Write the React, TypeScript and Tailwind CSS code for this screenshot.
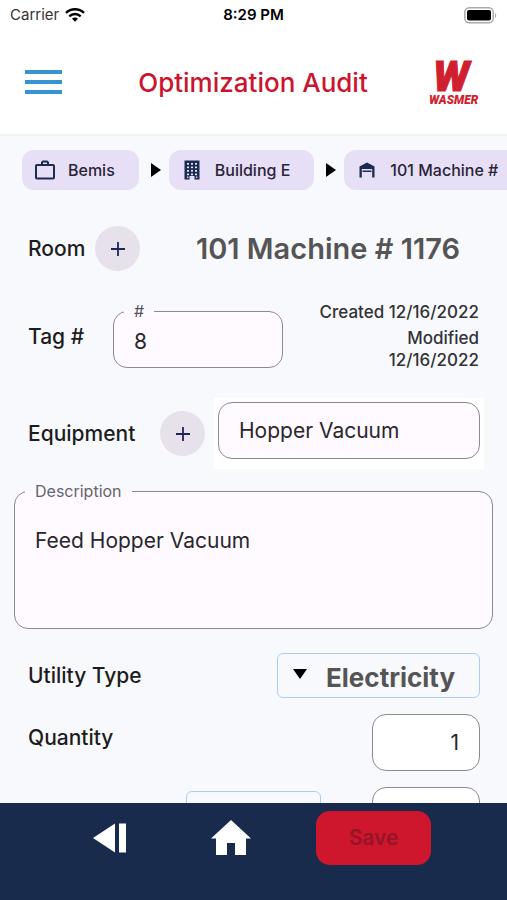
import type { ReactNode } from "react";

function WifiIcon() {
  return (
    <svg viewBox="0 0 20 15" className="h-4 w-5" fill="none" stroke="#000" strokeWidth="2.4" aria-hidden="true">
      <path d="M1 5.4C6 .5 14 .5 19 5.4" />
      <path d="M4.3 8.8c3.3-3 8.100-3 11.400 0" />
      <path d="M7 11.200c1.800-1.500 4.200-1.500 6 0L10 14.200z" fill="#000" stroke="none" />
    </svg>
  );
}

function BatteryIcon() {
  return (
    <svg viewBox="0 0 33 17" className="h-[17px] w-[33px]" aria-hidden="true">
      <rect x="0.750" y="0.750" width="28.500" height="15" rx="4.500" fill="#fff" stroke="#aaa" strokeWidth="1.500" />
      <rect x="3" y="3" width="24" height="10.500" rx="2" fill="#000" />
      <path d="M31 6v5c1.600-.8 1.600-4.200 0-5z" fill="#aaa" />
    </svg>
  );
}

function Logo() {
  return (
    <svg viewBox="0 0 50 46" className="h-[46px] w-[50px] overflow-visible" role="img" aria-label="Wasmer">
      <g fill="#d01f2f" fontFamily="Roboto, 'Liberation Sans', sans-serif" fontWeight="900" fontStyle="italic">
        <text x="4" y="32" fontSize="43" stroke="#d01f2f" strokeWidth="1">W</text>
        <text x="0" y="45" fontSize="12">WASMER</text>
      </g>
    </svg>
  );
}

function BriefcaseIcon() {
  return (
    <svg viewBox="0 0 22 20" className="h-5 w-[22px]" fill="none" stroke="#1b2c50" strokeWidth="2" strokeLinejoin="round" aria-hidden="true">
      <rect x="2" y="5" width="18" height="13.500" rx="1" />
      <path d="M8 5V2.500L9 1.500h4l1 1V5" />
    </svg>
  );
}

function OfficeIcon() {
  const rows = [3, 6.500, 10, 13.500];
  const columns = [3, 7, 11];
  return (
    <svg viewBox="0 0 16 20" className="h-5 w-4" aria-hidden="true">
      <path d="M.5.500h15v19h-5V16h-5v3.500h-5z" fill="#1b2c50" />
      {rows.map((y) => columns.map((x) => <rect key={`${x}-${y}`} x={x} y={y} width="2" height="1.700" fill="#e6dff6" />))}
      <rect x="3" y="16.500" width="1.300" height="1.500" fill="#e6dff6" />
      <rect x="12" y="16.500" width="1.300" height="1.500" fill="#e6dff6" />
    </svg>
  );
}

function GarageIcon() {
  return (
    <svg viewBox="0 0 16 16" className="h-4 w-4" fill="#1b2c50" aria-hidden="true">
      <path d="M.5 4.500 8 .5l7.500 4v11h-2.300V7H2.800v8.500H.5z" />
      <path d="M3.500 8.500h9V10h-9z" />
    </svg>
  );
}

function Separator() {
  return (
    <svg viewBox="0 0 10 14" className="mr-2 ml-3 h-3.5 w-2.5 shrink-0" aria-hidden="true">
      <path d="M0 0 10 7 0 14z" fill="#000" />
    </svg>
  );
}

function Chip({ icon, children }: { icon: ReactNode; children: ReactNode }) {
  return (
    <a href="#" className="flex h-10 shrink-0 items-center rounded-xl bg-[#e6dff6] px-3 text-base font-medium whitespace-nowrap text-[#2a2438]">
      <span className="flex w-[22px] justify-center">{icon}</span>
      <span className="px-3">{children}</span>
    </a>
  );
}

function AddButton({ label }: { label: string }) {
  return (
    <button type="button" aria-label={label} className="flex size-[45px] shrink-0 items-center justify-center rounded-full bg-[#e6e1eb]">
      <svg viewBox="0 0 14 14" className="size-3.5" stroke="#1f2459" strokeWidth="1.800" aria-hidden="true">
        <path d="M7 0v14M0 7h14" />
      </svg>
    </button>
  );
}

const label = "text-[21px] leading-7 font-medium text-[#1d1d20]";
const box = "h-[57px] rounded-[14px] border-[1.5px] border-[#8c8a8f]";

export default function App() {
  return (
    <div className="flex h-screen flex-col overflow-hidden bg-[#f8f9fd] font-[Inter,'Liberation_Sans',sans-serif]">
      <div className="grid h-[30px] shrink-0 grid-cols-3 items-center bg-white px-2.5 text-[15px] text-black">
        <div className="flex items-center gap-1.5 text-[#333]">
          Carrier <WifiIcon />
        </div>
        <div className="text-center font-semibold">8:29 PM</div>
        <div className="flex justify-end">
          <BatteryIcon />
        </div>
      </div>

      <header className="flex h-[106px] shrink-0 items-center justify-between border-b-2 border-[#f1f2f5] bg-white pr-7 pl-[25px]">
        <button type="button" aria-label="Menu" className="flex w-[52px] flex-col gap-1.5">
          <span className="h-1 w-[37px] bg-[#3793d2]" />
          <span className="h-1 w-[37px] bg-[#3793d2]" />
          <span className="h-1 w-[37px] bg-[#3793d2]" />
        </button>
        <h1 className="text-[26px] font-medium text-[#cb1530]">Optimization Audit</h1>
        <Logo />
      </header>

      <main className="min-h-0 flex-1 overflow-hidden">
        <nav aria-label="Location" className="flex items-center overflow-hidden pt-3.5 pl-[22px]">
          <Chip icon={<BriefcaseIcon />}>Bemis</Chip>
          <Separator />
          <Chip icon={<OfficeIcon />}>Building E</Chip>
          <Separator />
          <Chip icon={<GarageIcon />}>101 Machine #</Chip>
        </nav>

        <div className="mt-9 flex items-center pr-[47px] pl-7">
          <span className={label}>Room</span>
          <div className="ml-2.5">
            <AddButton label="Add room" />
          </div>
          <h2 className="ml-auto text-[29px] leading-10 font-semibold text-[#555]">101 Machine # 1176</h2>
        </div>

        <div className="mt-8 flex items-start pr-7 pl-7">
          <label htmlFor="tag" className={`mt-5 w-[85px] shrink-0 ${label}`}>
            Tag #
          </label>
          <fieldset className="h-[65px] w-[170px] shrink-0 rounded-[14px] border-[1.5px] border-[#8c8a8f] bg-[#fefaff] px-2.5">
            <legend className="px-2.5 text-base leading-4 text-[#55535a]">#</legend>
            <input id="tag" defaultValue="8" className="h-11 w-full bg-transparent px-2.5 text-[21px] text-[#29272d] outline-none" />
          </fieldset>
          <div className="flex-1 text-right text-[17px] leading-[22px] font-medium text-[#333236]">
            <p className="-mt-0.5">Created 12/16/2022</p>
            <p className="mt-1">
              Modified
              <br />
              12/16/2022
            </p>
          </div>
        </div>

        <div className="mt-[27px] flex items-center pr-[27px] pl-7">
          <label htmlFor="equipment" className={`w-[132px] shrink-0 ${label}`}>
            Equipment
          </label>
          <AddButton label="Add equipment" />
          <div className="-mr-1 ml-[9px] min-w-0 flex-1 bg-white px-1 pt-1 pb-2.5">
            <input id="equipment" defaultValue="Hopper Vacuum" className={`w-full bg-[#fefaff] px-5 text-[21px] text-[#29272d] ${box}`} />
          </div>
        </div>

        <fieldset className="mx-3.5 mt-3 h-[148px] rounded-[14px] border-[1.5px] border-[#8c8a8f] bg-[#fefaff] px-2.5">
          <legend className="px-2.5 text-base leading-5 text-[#66646b]">
            <label htmlFor="description">Description</label>
          </legend>
          <textarea
            id="description"
            defaultValue="Feed Hopper Vacuum"
            className="mt-[26px] h-20 w-full resize-none bg-transparent px-2.5 text-[21px] leading-7 text-[#29272d] outline-none"
          />
        </fieldset>

        <div className="mt-6 flex items-center justify-between pr-[27px] pl-7">
          <label htmlFor="utility" className={label}>
            Utility Type
          </label>
          <div className="relative">
            <select
              id="utility"
              className="h-[45px] w-[203px] appearance-none rounded-md border-[1.5px] border-[#a9cdfa] bg-transparent pt-1 pl-12 text-[26px] font-bold text-[#555]"
            >
              <option>Electricity</option>
            </select>
            <svg viewBox="0 0 14 10" className="pointer-events-none absolute top-4 left-4 h-2.5 w-3.5" aria-hidden="true">
              <path d="M0 0h14L7 10z" fill="#000" />
            </svg>
          </div>
        </div>

        <div className="mt-4 flex items-start justify-between pr-[27px] pl-7">
          <label htmlFor="quantity" className={`mt-2.5 ${label}`}>
            Quantity
          </label>
          <input id="quantity" defaultValue="1" className={`w-[108px] bg-white px-5 text-right text-[21px] text-[#29272d] ${box}`} />
        </div>

        <div className="mt-4 flex items-start justify-end pr-[27px] pl-7">
          <select
            aria-label="Unit"
            className="mt-1 mr-[51px] h-[45px] w-[135px] appearance-none rounded-md border-[1.5px] border-[#a9cdfa] bg-transparent text-[#555]"
          >
            <option value="" />
          </select>
          <input aria-label="Amount" className={`w-[108px] bg-white px-5 text-right text-[21px] ${box}`} />
        </div>
      </main>

      <footer className="flex h-[97px] shrink-0 items-start bg-[#182b4d] pt-2 pr-[76px] pl-[93px]">
        <button type="button" aria-label="Back" className="flex h-[54px] items-center">
          <svg viewBox="0 0 34 30" className="h-[30px] w-[34px]" fill="#fff" aria-hidden="true">
            <path d="M0 15 22 .5v29zM26 .5h7v29h-7z" />
          </svg>
        </button>
        <button type="button" aria-label="Home" className="mr-[65px] ml-auto flex h-[54px] items-center">
          <svg viewBox="0 0 40 36" className="h-9 w-10" fill="#fff" aria-hidden="true">
            <path d="M20 0 40 18.500h-5V35H24V23h-8v12H5V18.500H0z" />
          </svg>
        </button>
        <button type="button" className="h-[54px] w-[115px] rounded-[14px] bg-[#ce162d] text-[21px] font-semibold text-[#941526]">
          Save
        </button>
      </footer>
    </div>
  );
}
